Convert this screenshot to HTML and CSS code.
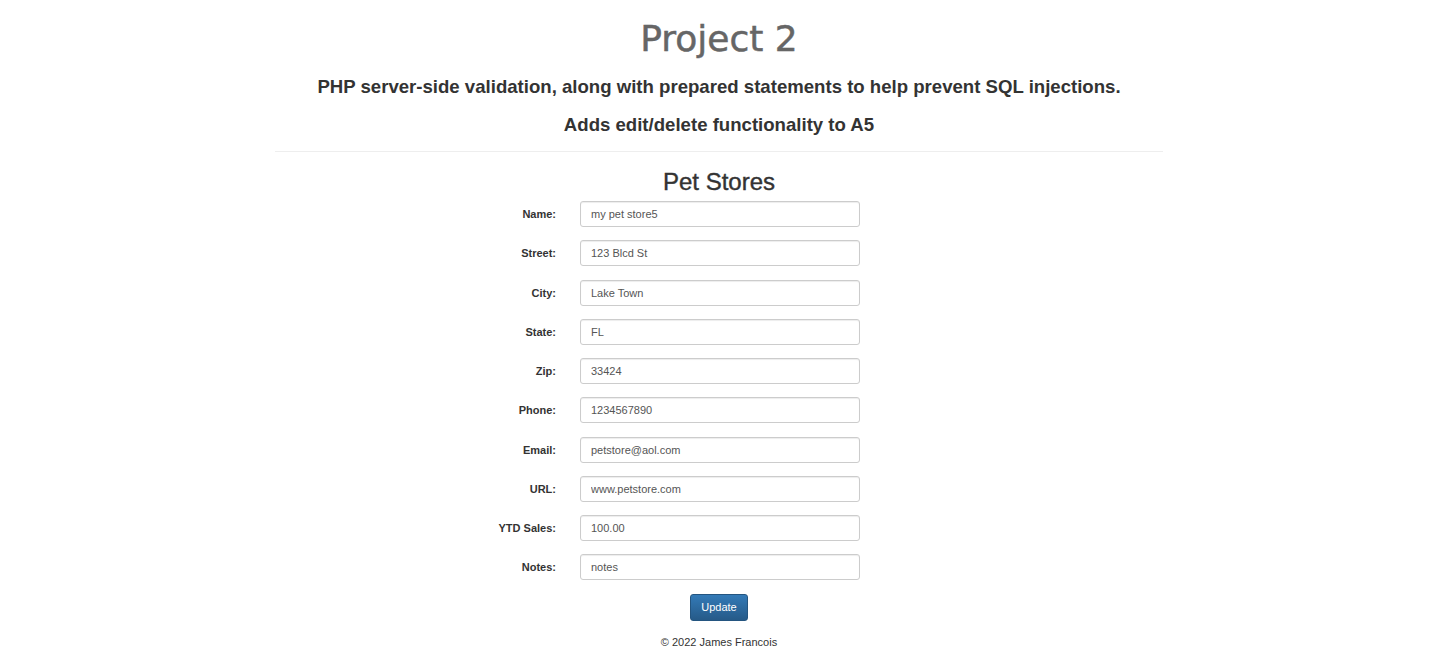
FILE: index.html
```html
<!DOCTYPE html>
<html>
<head>
<meta charset="utf-8">
<title>Project 2</title>
<link rel="stylesheet" href="styles.css">
</head>
<body>
<div class="container">
  <header class="page-head">
    <h1 class="title">Project 2</h1>
    <h4 class="sub">PHP server-side validation, along with prepared statements to help prevent SQL injections.</h4>
    <h4 class="sub sub2">Adds edit/delete functionality to A5</h4>
  </header>
  <hr class="rule">
  <h2 class="form-title">Pet Stores</h2>
  <form class="form">
    <div class="row"><label class="lbl">Name:</label><input class="inp" type="text" value="my pet store5"></div>
    <div class="row"><label class="lbl">Street:</label><input class="inp" type="text" value="123 Blcd St"></div>
    <div class="row"><label class="lbl">City:</label><input class="inp" type="text" value="Lake Town"></div>
    <div class="row"><label class="lbl">State:</label><input class="inp" type="text" value="FL"></div>
    <div class="row"><label class="lbl">Zip:</label><input class="inp" type="text" value="33424"></div>
    <div class="row"><label class="lbl">Phone:</label><input class="inp" type="text" value="1234567890"></div>
    <div class="row"><label class="lbl">Email:</label><input class="inp" type="text" value="petstore@aol.com"></div>
    <div class="row"><label class="lbl">URL:</label><input class="inp" type="text" value="www.petstore.com"></div>
    <div class="row"><label class="lbl">YTD Sales:</label><input class="inp" type="text" value="100.00"></div>
    <div class="row"><label class="lbl">Notes:</label><input class="inp" type="text" value="notes"></div>
    <div class="actions"><button class="btn" type="button">Update</button></div>
  </form>
  <footer class="foot">© 2022 James Francois</footer>
</div>
</body>
</html>
```

FILE: styles.css
```css
html, body {
  margin: 0;
  padding: 0;
  background: #fff;
}
body {
  font-family: "Liberation Sans", Arial, sans-serif;
  color: #333;
}
.container {
  width: 888px;
  margin: 0 auto;
  display: flex;
  flex-direction: column;
  align-items: stretch;
}
.page-head {
  text-align: center;
}
.title {
  margin: 16px 0 0;
  font-family: "DejaVu Sans", sans-serif;
  font-weight: normal;
  font-size: 36px;
  line-height: 46px;
  color: #666;
  -webkit-text-stroke: 0.5px #666;
}
.sub {
  margin: 14px 0 0;
  font-size: 18.6px;
  font-weight: bold;
  line-height: 22px;
  color: #333;
}
.sub2 {
  margin-top: 16px;
}
.rule {
  margin: 15px 0 0;
  border: 0;
  border-top: 1px solid #eee;
  height: 0;
}
.form-title {
  margin: 16px 0 0;
  text-align: center;
  font-size: 24px;
  font-weight: 500;
  line-height: 28px;
  color: #333;
  -webkit-text-stroke: 0.4px #333;
}
.form {
  margin-top: 5px;
  display: flex;
  flex-direction: column;
  gap: 13.25px;
}
.row {
  display: flex;
  align-items: center;
  height: 26px;
}
.lbl {
  width: 305px;
  text-align: right;
  font-size: 11px;
  font-weight: bold;
  color: #333;
  padding-right: 24px;
  box-sizing: border-box;
}
.inp {
  width: 280px;
  height: 26px;
  box-sizing: border-box;
  border: 1px solid #ccc;
  border-radius: 3px;
  padding: 0 10px;
  font-family: "Liberation Sans", Arial, sans-serif;
  font-size: 11px;
  color: #555;
  box-shadow: inset 0 1px 1px rgba(0,0,0,0.075);
}
.actions {
  display: flex;
  justify-content: center;
}
.btn {
  height: 27px;
  padding: 0 10px;
  font-family: "Liberation Sans", Arial, sans-serif;
  font-size: 11px;
  color: #fff;
  background: linear-gradient(#337ab7, #265a88);
  border: 1px solid #245580;
  border-radius: 3px;
  cursor: pointer;
}
.foot {
  margin-top: 15px;
  text-align: center;
  font-size: 11px;
  color: #333;
}
```
